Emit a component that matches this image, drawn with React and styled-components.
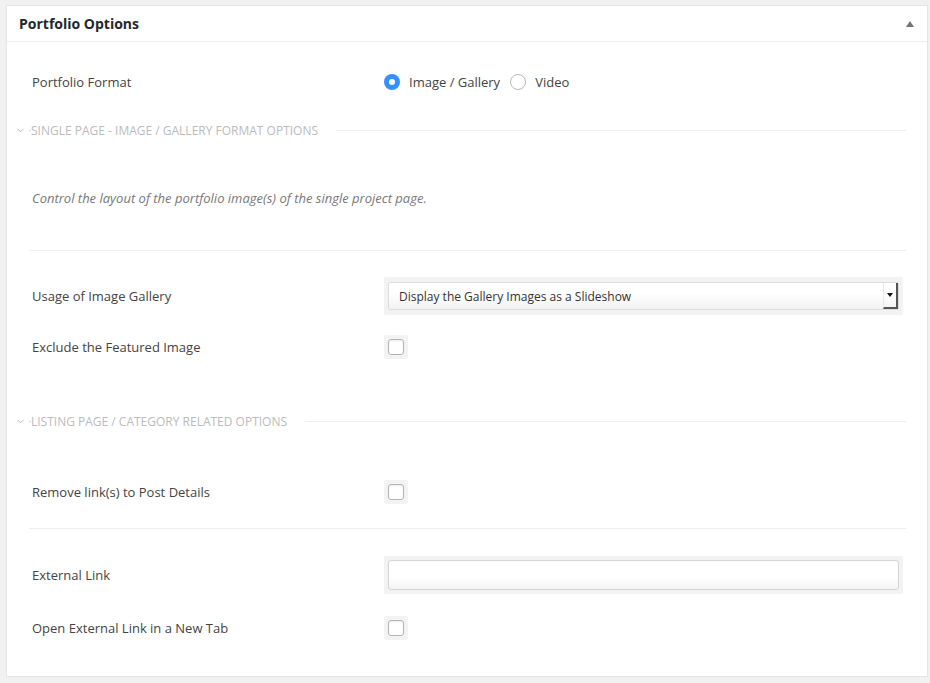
import React from 'react';
import styled, { createGlobalStyle } from 'styled-components';

const Global = createGlobalStyle`
  body {
    margin: 0;
    background: #f1f1f1;
    font-family: "Open Sans", "Noto Sans", sans-serif;
    color: #444;
  }
`;

const Box = styled.div`
  margin: 5px 0 0 6px;
  width: 922px;
  height: 672px;
  background: #fff;
  border: 1px solid #e5e5e5;
  box-shadow: 0 1px 1px rgba(0,0,0,0.04);
  box-sizing: border-box;
`;

const Header = styled.div`
  height: 35px;
  display: flex;
  align-items: center;
  justify-content: space-between;
  padding: 0 12px;
  border-bottom: 1px solid #eee;
`;

const Title = styled.h2`
  margin: 0;
  font-size: 14px;
  font-weight: 700;
  color: #23282d;
`;

const Toggle = styled.span`
  width: 0;
  height: 0;
  border-left: 4px solid transparent;
  border-right: 4px solid transparent;
  border-bottom: 6px solid #72777c;
  margin-right: 1px;
`;

const Content = styled.div`
  padding: 20px 21px 0 22px;
`;

const Row = styled.div`
  display: flex;
  align-items: center;
  height: ${p => p.$h || 36}px;
  margin-top: ${p => p.$mt || 0}px;
  padding-left: 3px;
`;

const Label = styled.div`
  width: 352px;
  flex-shrink: 0;
  font-size: 13px;
  color: #444;
`;

const Control = styled.div`
  display: flex;
  align-items: center;
  flex: 1;
`;

const RadioDot = styled.span`
  width: 16px;
  height: 16px;
  border-radius: 50%;
  box-sizing: border-box;
  display: inline-flex;
  align-items: center;
  justify-content: center;
  background: ${p => (p.$on ? '#3390ff' : '#fff')};
  border: ${p => (p.$on ? 'none' : '1px solid #b4b9be')};
  margin-right: 9px;
  &::after {
    content: '';
    width: 6px;
    height: 6px;
    border-radius: 50%;
    background: #fff;
    display: ${p => (p.$on ? 'block' : 'none')};
  }
`;

const RadioText = styled.span`
  font-size: 13px;
  color: #444;
  margin-right: 10px;
`;

const SectionHead = styled.div`
  display: flex;
  align-items: center;
  height: 20px;
  margin: ${p => p.$mt}px 0 0 -12px;
  font-size: 12px;
  color: #bbb;
  text-transform: uppercase;
  &::after {
    content: '';
    flex: 1;
    height: 1px;
    background: #eee;
    margin-left: 18px;
  }
`;

const Chevron = styled.svg`
  width: 7px;
  height: 5px;
  margin-right: 5px;
`;

const Tick = styled.span`
  width: 2px;
  height: 1px;
  background: #ddd;
`;

const Desc = styled.p`
  margin: 0;
  padding: 49px 0 43px 3px;
  line-height: 18px;
  font-size: 13px;
  font-style: italic;
  color: #777;
  border-bottom: 1px solid #eee;
`;

const Divider = styled.div`
  height: 1px;
  background: #eee;
  margin-top: ${p => p.$mt}px;
`;

const Well = styled.div`
  background: #f3f3f3;
  border-radius: 2px;
  padding: 4px;
  box-sizing: border-box;
  width: ${p => (p.$wide ? '519px' : '24px')};
  height: ${p => (p.$wide ? '38px' : '24px')};
`;

const SelectBox = styled.div`
  height: 28px;
  margin-top: 1px;
  box-sizing: border-box;
  border: 1px solid #ddd;
  border-radius: 2px;
  background: linear-gradient(#fff 40%, #f2f2f2);
  display: flex;
  align-items: center;
  font-size: 12px;
  color: #333;
  padding-left: 10px;
`;

const SelectText = styled.span`
  flex: 1;
`;

const ArrowBox = styled.span`
  width: 15px;
  align-self: stretch;
  border-left: 1px solid #e8e8e8;
  border-right: 2px solid #555;
  border-bottom: 2px solid #555;
  display: flex;
  align-items: center;
  justify-content: center;
  box-sizing: border-box;
  &::after {
    content: '';
    border-left: 3px solid transparent;
    border-right: 3px solid transparent;
    border-top: 4px solid #111;
  }
`;

const TextInput = styled.div`
  height: 30px;
  box-sizing: border-box;
  border: 1px solid #d4d4d4;
  border-radius: 3px;
  background: linear-gradient(#fff 55%, #f4f4f4);
`;

const Check = styled.div`
  width: 16px;
  height: 16px;
  box-sizing: border-box;
  border: 1px solid #b4b4b4;
  border-radius: 3px;
  background: #fff;
  box-shadow: inset 0 1px 2px rgba(0,0,0,0.08);
`;

const Section = ({ title, mt }) => (
  <SectionHead $mt={mt}>
    <Chevron viewBox="0 0 7 5">
      <path d="M0.5 0.8 L3.5 3.8 L6.5 0.8" fill="none" stroke="#bbb" strokeWidth="1" />
    </Chevron>
    <Tick />
    {title}
  </SectionHead>
);

const CheckRow = ({ label, mt }) => (
  <Row $mt={mt}>
    <Label>{label}</Label>
    <Control>
      <Well><Check /></Well>
    </Control>
  </Row>
);

export default function App() {
  return (
    <>
      <Global />
      <Box>
        <Header>
          <Title>Portfolio Options</Title>
          <Toggle />
        </Header>
        <Content>
          <Row $h={40}>
            <Label>Portfolio Format</Label>
            <Control>
              <RadioDot $on />
              <RadioText>Image / Gallery</RadioText>
              <RadioDot />
              <RadioText>Video</RadioText>
            </Control>
          </Row>
          <Section title="Single Page - Image / Gallery Format Options" mt={18} />
          <Desc>Control the layout of the portfolio image(s) of the single project page.</Desc>
          <Row $mt={27}>
            <Label>Usage of Image Gallery</Label>
            <Control>
              <Well $wide>
                <SelectBox>
                  <SelectText>Display the Gallery Images as a Slideshow</SelectText>
                  <ArrowBox />
                </SelectBox>
              </Well>
            </Control>
          </Row>
          <CheckRow label="Exclude the Featured Image" mt={15} />
          <Section title="Listing Page / Category Related Options" mt={46} />
          <CheckRow label="Remove link(s) to Post Details" mt={43} />
          <Divider $mt={18} />
          <Row $h={38} $mt={27}>
            <Label>External Link</Label>
            <Control>
              <Well $wide><TextInput /></Well>
            </Control>
          </Row>
          <CheckRow label="Open External Link in a New Tab" mt={16} />
        </Content>
      </Box>
    </>
  );
}
